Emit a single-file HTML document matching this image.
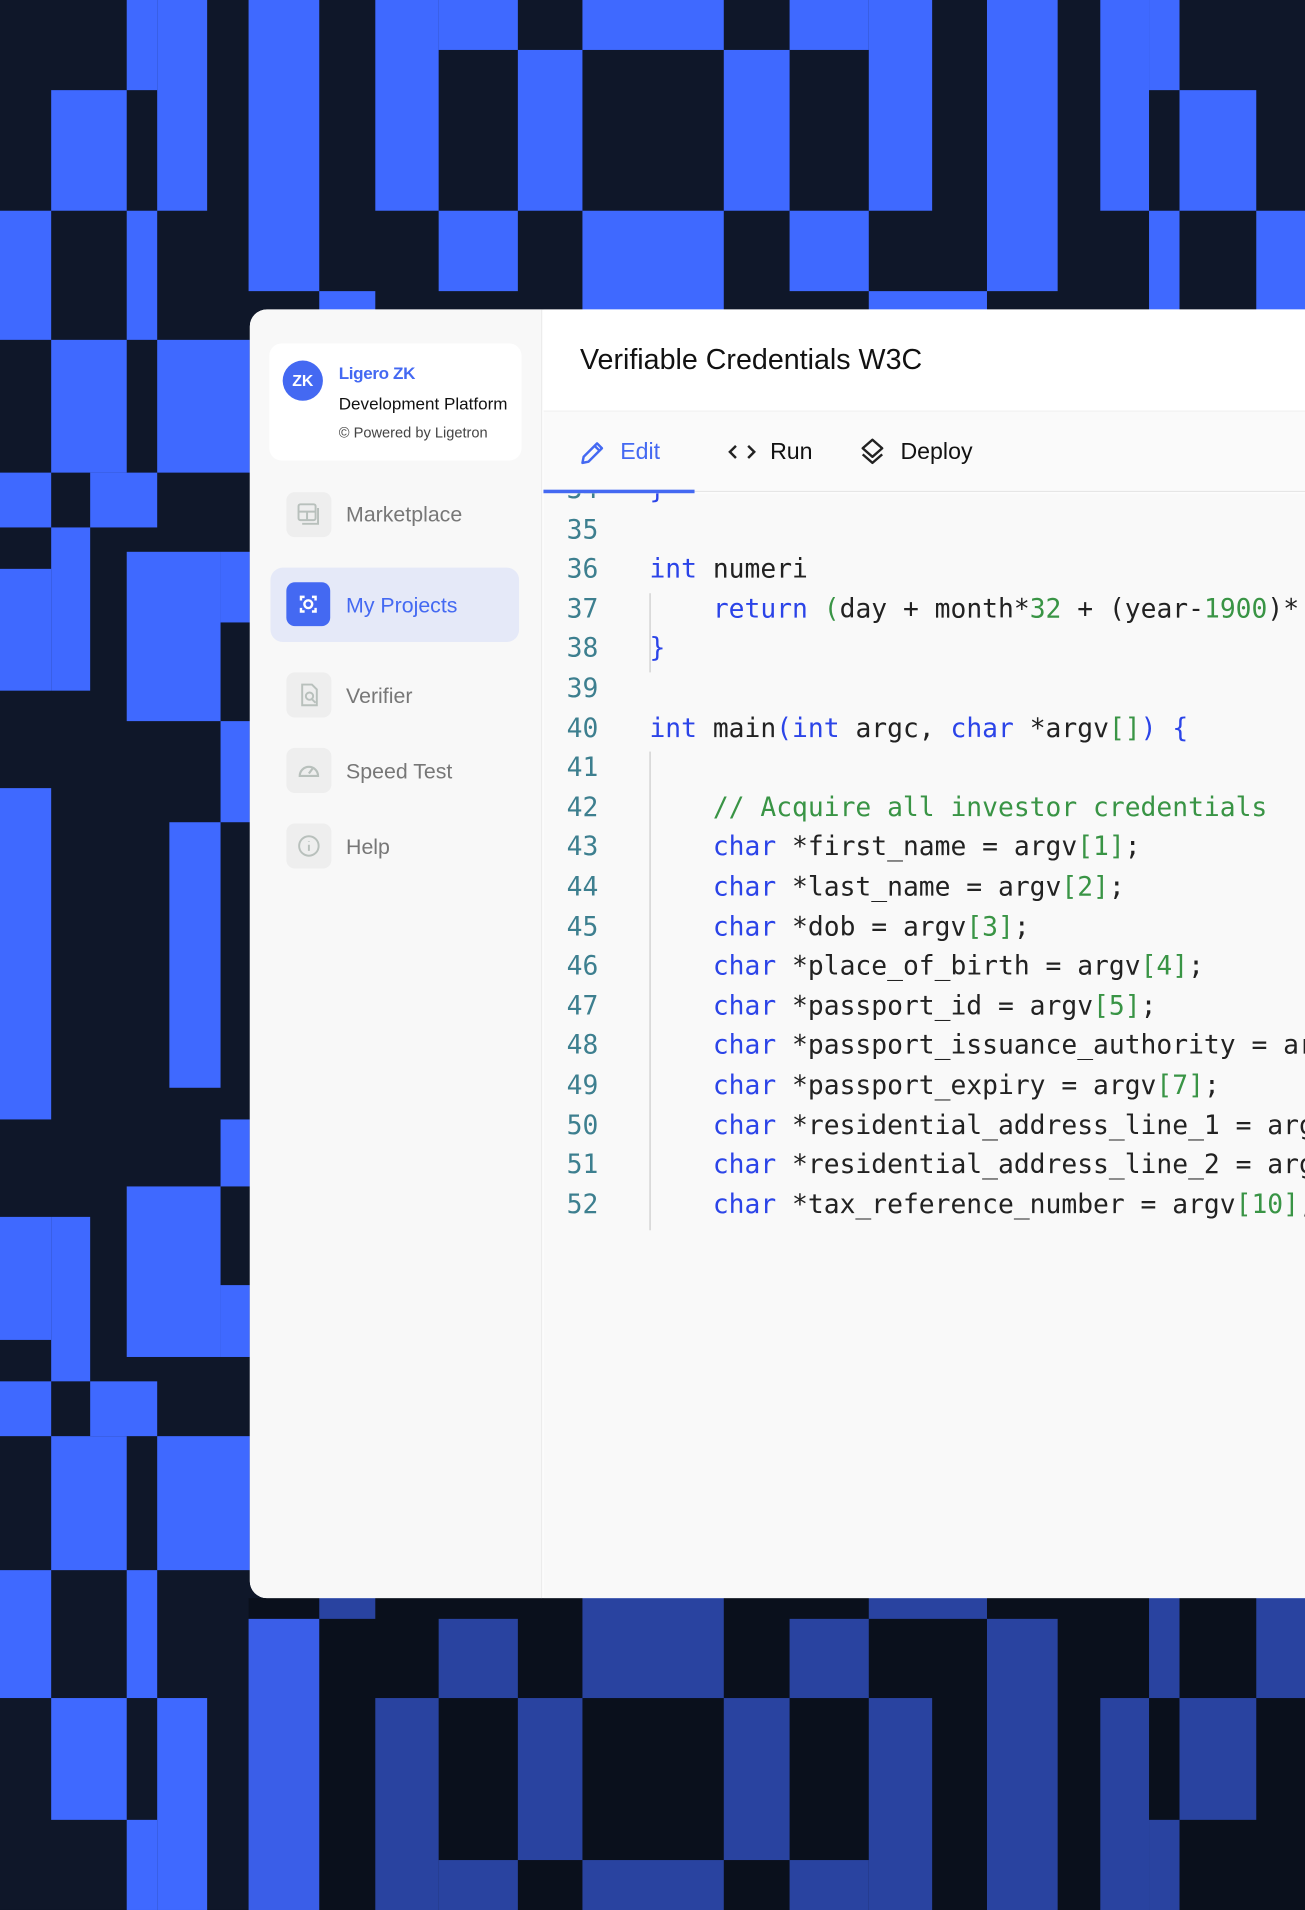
<!DOCTYPE html>
<html><head><meta charset="utf-8"><style>
*{margin:0;padding:0;box-sizing:border-box}
html,body{width:1305px;height:1910px;overflow:hidden;background:#0f1729}
#s{position:absolute;left:0;top:0;width:1071px;height:1568px;transform:scale(1.21849,1.21811);transform-origin:0 0;font-family:"Liberation Sans",sans-serif}
.a{position:absolute}
#card{position:absolute;left:205px;top:254px;width:900px;height:1058px;background:#fff;border-radius:14px 0 0 14px;overflow:hidden}
#side{position:absolute;left:0;top:0;width:240px;height:1058px;background:#f8f8f8;border-right:1px solid #ececec}
.logo{position:absolute;left:16px;top:28px;width:207px;height:96px;background:#fff;border-radius:10px}
.zk{position:absolute;left:11px;top:14px;width:33px;height:33px;border-radius:50%;background:#4469f2;color:#fff;font-weight:bold;font-size:13px;text-align:center;line-height:33px}
.item{position:absolute;left:30px;width:37px;height:37px;border-radius:7px;background:#eeeeee}
.lbl{position:absolute;left:79px;font-size:17.5px;color:#777;line-height:20px}
.code{position:absolute;font-family:"DejaVu Sans Mono","Liberation Mono",monospace;font-size:21.6px;line-height:32.6px;white-space:pre;color:#222}
.ln{color:#3d7f8f;text-align:right;width:26px}
.k{color:#2b44e8}.g{color:#399445}
</style></head><body>
<div id="s">
<svg class="a" style="left:0;top:0" width="1071" height="1568" viewBox="0 0 1071 1568">
<rect width="1071" height="1568" fill="#0f1729"/>
<g fill="#3f69ff">
<rect x="0" y="173" width="42" height="106"/><rect x="0" y="388" width="42" height="45"/><rect x="0" y="467" width="42" height="100"/><rect x="0" y="647" width="42" height="272"/><rect x="0" y="999" width="42" height="101"/><rect x="0" y="1134" width="42" height="45"/><rect x="0" y="1289" width="42" height="105"/>
<rect x="42" y="74" width="62" height="99"/><rect x="42" y="279" width="62" height="109"/><rect x="42" y="1179" width="62" height="110"/><rect x="42" y="1394" width="62" height="100"/>
<rect x="42" y="433" width="32" height="134"/><rect x="42" y="999" width="32" height="135"/>
<rect x="74" y="388" width="55" height="45"/><rect x="74" y="1134" width="55" height="45"/>
<rect x="104" y="0" width="25" height="74"/><rect x="104" y="173" width="25" height="106"/><rect x="104" y="1289" width="25" height="105"/><rect x="104" y="1494" width="25" height="74"/>
<rect x="104" y="453" width="77" height="139"/><rect x="104" y="974" width="77" height="140"/>
<rect x="129" y="0" width="41" height="173"/><rect x="129" y="279" width="76" height="109"/><rect x="129" y="1179" width="76" height="110"/><rect x="129" y="1394" width="41" height="174"/>
<rect x="181" y="453" width="24" height="58"/><rect x="181" y="592" width="24" height="83"/><rect x="181" y="919" width="24" height="55"/><rect x="181" y="1055" width="24" height="59"/>
<rect x="139" y="675" width="42" height="218"/>
<rect x="204" y="0" width="58" height="239"/><rect x="262" y="239" width="46" height="20"/>
<rect x="308" y="0" width="52" height="173"/><rect x="360" y="0" width="65" height="41"/><rect x="360" y="173" width="65" height="66"/>
<rect x="425" y="41" width="53" height="132"/><rect x="478" y="0" width="116" height="41"/><rect x="478" y="173" width="116" height="86"/>
<rect x="594" y="41" width="54" height="132"/><rect x="648" y="0" width="65" height="41"/><rect x="648" y="173" width="65" height="66"/>
<rect x="713" y="0" width="52" height="173"/><rect x="713" y="239" width="97" height="20"/>
<rect x="810" y="0" width="58" height="239"/><rect x="903" y="0" width="40" height="173"/>
<rect x="943" y="0" width="25" height="74"/><rect x="943" y="173" width="25" height="86"/>
<rect x="968" y="74" width="63" height="99"/><rect x="1031" y="173" width="41" height="86"/>
</g>
<g fill="#3c61e5">
<rect x="262" y="1305" width="46" height="24"/>
<rect x="308" y="1394" width="52" height="174"/><rect x="360" y="1329" width="65" height="65"/><rect x="360" y="1527" width="65" height="41"/>
<rect x="425" y="1394" width="53" height="133"/><rect x="478" y="1305" width="116" height="89"/><rect x="478" y="1527" width="116" height="41"/>
<rect x="594" y="1394" width="54" height="133"/><rect x="648" y="1329" width="65" height="65"/><rect x="648" y="1527" width="65" height="41"/>
<rect x="713" y="1305" width="97" height="24"/><rect x="713" y="1394" width="52" height="174"/>
<rect x="810" y="1329" width="58" height="239"/><rect x="903" y="1394" width="40" height="174"/>
<rect x="943" y="1305" width="25" height="89"/><rect x="943" y="1494" width="25" height="74"/>
<rect x="968" y="1394" width="63" height="100"/><rect x="1031" y="1305" width="41" height="89"/>
</g>
<rect x="204" y="1312" width="867" height="256" fill="#000" opacity="0.3"/>
<rect x="204" y="1329" width="58" height="239" fill="#3a5ee8"/>
</svg>

<div id="card">
 <div id="side">
  <div class="logo">
   <div class="zk">ZK</div>
   <div class="a" style="left:57px;top:16px;font-size:14px;font-weight:bold;color:#4469f2;letter-spacing:-0.3px">Ligero ZK</div>
   <div class="a" style="left:57px;top:41px;font-size:14px;color:#111">Development Platform</div>
   <div class="a" style="left:57px;top:66px;font-size:12px;color:#444">© Powered by Ligetron</div>
  </div>
  <div class="item" style="top:150px"><svg width="37" height="37" viewBox="0 0 37 37" fill="none" stroke="#b8c0bc" stroke-width="1.6"><rect x="10" y="10" width="14" height="13" rx="1.5"/><path d="M10 16h14M17 16v7M13 26h13V13"/></svg></div>
  <div class="lbl" style="top:158px">Marketplace</div>
  <div class="a" style="left:17px;top:212px;width:204px;height:61px;background:#e5e9f8;border-radius:10px"></div>
  <div class="item" style="top:224px;background:#4469f2;width:36px;height:36px"><svg width="36" height="36" viewBox="0 0 36 36" fill="none" stroke="#fff" stroke-width="2"><path d="M12 15v-3h3M21 12h3v3M24 21v3h-3M15 24h-3v-3"/><circle cx="18" cy="18" r="3.2"/></svg></div>
  <div class="lbl" style="top:233px;color:#4469f2">My Projects</div>
  <div class="item" style="top:298px"><svg width="37" height="37" viewBox="0 0 37 37" fill="none" stroke="#b8c0bc" stroke-width="1.6"><path d="M13 10h8l4 4v13H13z"/><circle cx="19" cy="19.5" r="3"/><path d="M21 22l3 3"/></svg></div>
  <div class="lbl" style="top:307px">Verifier</div>
  <div class="item" style="top:360px"><svg width="37" height="37" viewBox="0 0 37 37" fill="none" stroke="#b8c0bc" stroke-width="1.8"><path d="M11 23a7.5 7.5 0 1 1 15 0z"/><path d="M18.5 21l3-4"/></svg></div>
  <div class="lbl" style="top:369px">Speed Test</div>
  <div class="item" style="top:422px"><svg width="37" height="37" viewBox="0 0 37 37" fill="none" stroke="#b8c0bc" stroke-width="1.6"><circle cx="18.5" cy="18.5" r="8"/><path d="M18.5 17.5v5M18.5 14.5v.5"/></svg></div>
  <div class="lbl" style="top:431px">Help</div>
 </div>
 <div class="a" style="left:241px;top:0;width:700px;height:84px;background:#fff;border-bottom:1px solid #f0f0f0"></div>
 <div class="a" style="left:271px;top:28px;font-size:23.5px;color:#111">Verifiable Credentials W3C</div>
 <div class="a" style="left:241px;top:84px;width:700px;height:66px;background:#fafafa;border-bottom:1px solid #e6e6e6"></div>
 <div class="a" style="left:241px;top:148px;width:124px;height:3px;background:#4469f2"></div>
 <svg class="a" style="left:270px;top:107px" width="22" height="22" viewBox="0 0 22 22" fill="none" stroke="#4469f2" stroke-width="2" stroke-linejoin="round"><path d="M3 19l1-5L15 3l4 4L8 18z"/><path d="M13 5l4 4"/></svg>
 <div class="a" style="left:304px;top:107px;font-size:19px;color:#4469f2">Edit</div>
 <svg class="a" style="left:392px;top:108px" width="24" height="18" viewBox="0 0 24 18" fill="none" stroke="#222" stroke-width="2"><path d="M7 4L2 9l5 5M17 4l5 5-5 5"/></svg>
 <div class="a" style="left:427px;top:107px;font-size:19px;color:#111">Run</div>
 <svg class="a" style="left:500px;top:105px" width="22" height="24" viewBox="0 0 22 24" fill="none" stroke="#222" stroke-width="2" stroke-linejoin="round"><path d="M11 2l8 7-8 7-8-7z"/><path d="M3 14l8 7 8-7"/></svg>
 <div class="a" style="left:534px;top:107px;font-size:19px;color:#111">Deploy</div>
 <div class="a" style="left:241px;top:151px;width:700px;height:907px;background:#f9f9f9;overflow:hidden">
  <div class="a" style="left:87px;top:82px;width:1px;height:65px;background:#ccc"></div>
  <div class="a" style="left:87px;top:212px;width:1px;height:393px;background:#ccc"></div>
  <div class="code ln" style="left:19px;top:-18px">34
35
36
37
38
39
40
41
42
43
44
45
46
47
48
49
50
51
52</div>
  <div class="code" style="left:87px;top:-18px"><span class="k">}</span>

<span class="k">int</span> numeri
    <span class="k">return</span> <span class="g">(</span>day + month*<span class="g">32</span> + (year-<span class="g">1900</span>)*
<span class="k">}</span>

<span class="k">int</span> main<span class="k">(int</span> argc, <span class="k">char</span> *argv<span class="g">[]</span><span class="k">) {</span>

    <span class="g">// Acquire all investor credentials</span>
    <span class="k">char</span> *first_name = argv<span class="g">[1]</span>;
    <span class="k">char</span> *last_name = argv<span class="g">[2]</span>;
    <span class="k">char</span> *dob = argv<span class="g">[3]</span>;
    <span class="k">char</span> *place_of_birth = argv<span class="g">[4]</span>;
    <span class="k">char</span> *passport_id = argv<span class="g">[5]</span>;
    <span class="k">char</span> *passport_issuance_authority = argv<span class="g">[6]</span>;
    <span class="k">char</span> *passport_expiry = argv<span class="g">[7]</span>;
    <span class="k">char</span> *residential_address_line_1 = argv<span class="g">[8]</span>;
    <span class="k">char</span> *residential_address_line_2 = argv<span class="g">[9]</span>;
    <span class="k">char</span> *tax_reference_number = argv<span class="g">[10]</span>;</div>
 </div>
</div>
</div>
</body></html>
